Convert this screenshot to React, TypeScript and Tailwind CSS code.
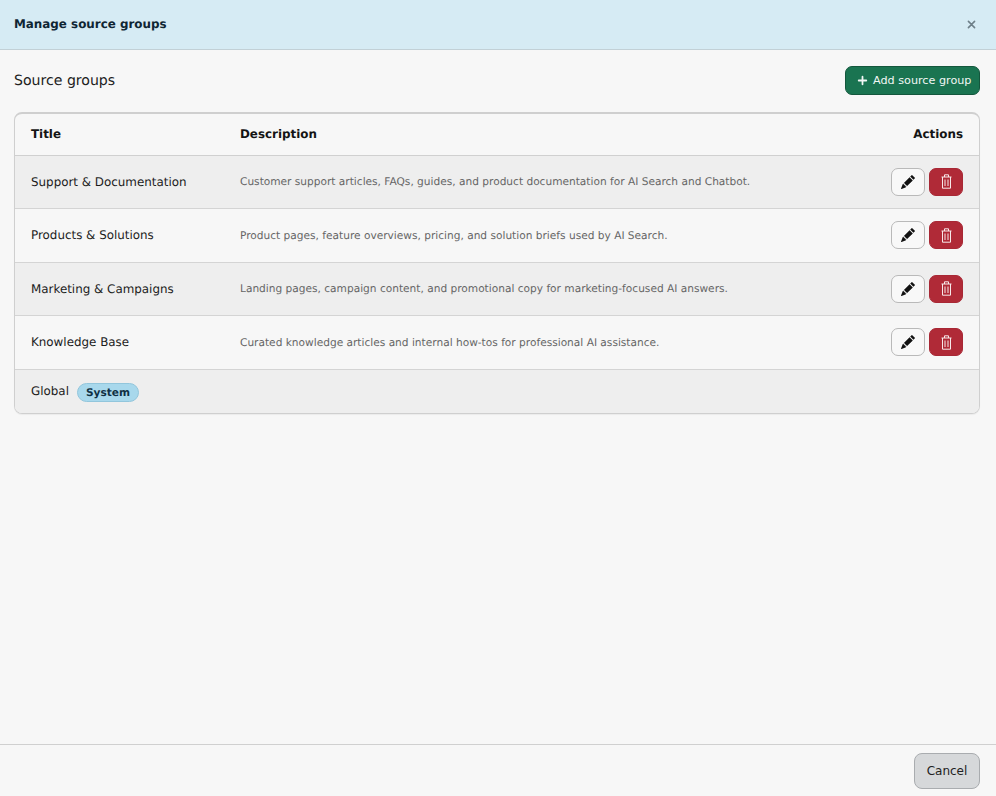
import { BsPencilFill, BsPlusLg, BsXLg } from "react-icons/bs";

const rows = [
  { t: "Support & Documentation", d: "Customer support articles, FAQs, guides, and product documentation for AI Search and Chatbot.", alt: true },
  { t: "Products & Solutions", d: "Product pages, feature overviews, pricing, and solution briefs used by AI Search.", alt: false },
  { t: "Marketing & Campaigns", d: "Landing pages, campaign content, and promotional copy for marketing-focused AI answers.", alt: true },
  { t: "Knowledge Base", d: "Curated knowledge articles and internal how-tos for professional AI assistance.", alt: false },
];

function Trash() {
  return (
    <svg viewBox="0 0 11 15" className="w-[11px] h-[15px]" fill="none" stroke="currentColor" strokeWidth="1" aria-hidden="true">
      <path d="M0.5 3h10M3.5 3V0.8h4V3M1.5 3v11.2h8V3M4 5.5v6.5M7 5.5v6.5" />
    </svg>
  );
}

export default function App() {
  return (
    <div className="h-[796px] w-[996px] flex flex-col bg-[#f7f7f7] text-[#1a1a1a] overflow-hidden [text-rendering:geometricPrecision]" style={{ fontFamily: '"DejaVu Sans", sans-serif' }}>
      <header className="h-[50px] shrink-0 flex items-center justify-between pl-[14px] pr-[20px] bg-[#d6ebf4] border-b border-[#c2d0d6]">
        <h1 className="text-[11.9px] font-bold text-[#0f2533]">Manage source groups</h1>
        <BsXLg className="text-[#6e7f88] w-[9px] h-[9px]" style={{ strokeWidth: 1.8 }} stroke="currentColor" />
      </header>
      <main className="flex-1 pl-[14px] pr-4 pt-[16px]">
        <div className="flex items-center justify-between h-[29px]">
          <h2 className="text-[14.1px] text-[#212121] pt-[2px]">Source groups</h2>
          <button className="h-[29px] w-[135px] flex items-center gap-[5px] pl-[11px] rounded-[7px] bg-[#1a7451] border border-[#14573d] text-[#f2f7f5] text-[11.2px]">
            <BsPlusLg className="w-[11px] h-[11px]" stroke="currentColor" style={{ strokeWidth: 1.6 }} />
            <span className="pt-px">Add source group</span>
          </button>
        </div>
        <div className="mt-[17px] rounded-[8px] border border-[#cfcfcf] border-t-2 overflow-hidden shadow-[0_1px_1px_rgba(0,0,0,0.05)]">
          <div className="h-[41.5px] flex items-center px-4 pt-[2px] text-[11.9px] font-bold text-[#141414] border-b border-[#d0d0d0]">
            <div className="w-[209px]">Title</div>
            <div className="flex-1">Description</div>
            <div>Actions</div>
          </div>
          {rows.map((r) => (
            <div key={r.t} className={`h-[53.5px] flex items-center px-4 border-b border-[#d4d4d4] ${r.alt ? "bg-[#eeeeee]" : ""}`}>
              <div className="w-[209px] text-[11.9px] text-[#1c1c1c] pt-[2px]">{r.t}</div>
              <div className="flex-1 text-[10.6px] text-[#666666] pt-[3px]">{r.d}</div>
              <div className="flex gap-[4px]">
                <button className="w-[34px] h-[28px] flex items-center justify-center rounded-[7px] bg-[#f8f8f8] border border-[#b9b9b9] text-[#111111]">
                  <BsPencilFill className="w-[14px] h-[14px]" />
                </button>
                <button className="w-[34px] h-[28px] flex items-center justify-center rounded-[7px] bg-[#b02a37] border border-[#a82835] text-[#f7e9ea]">
                  <Trash />
                </button>
              </div>
            </div>
          ))}
          <div className="h-[43px] flex items-center gap-2 px-4 bg-[#eeeeee] text-[11.9px] text-[#1c1c1c]">
            <span className="pt-px">Global</span>
            <span className="mt-[2px] h-[19px] px-2 pt-[3px] flex items-center rounded-full bg-[#a8d8ec] border border-[#92c6dc] text-[10.6px] font-bold text-[#0f3044]">System</span>
          </div>
        </div>
      </main>
      <footer className="h-[52px] shrink-0 border-t border-[#d0d0d0] flex items-center justify-end pr-4">
        <button className="w-[66px] h-[36px] rounded-[8px] bg-[#d6d8da] border border-[#a9acaf] text-[12px] text-[#222222] pt-px">Cancel</button>
      </footer>
    </div>
  );
}
